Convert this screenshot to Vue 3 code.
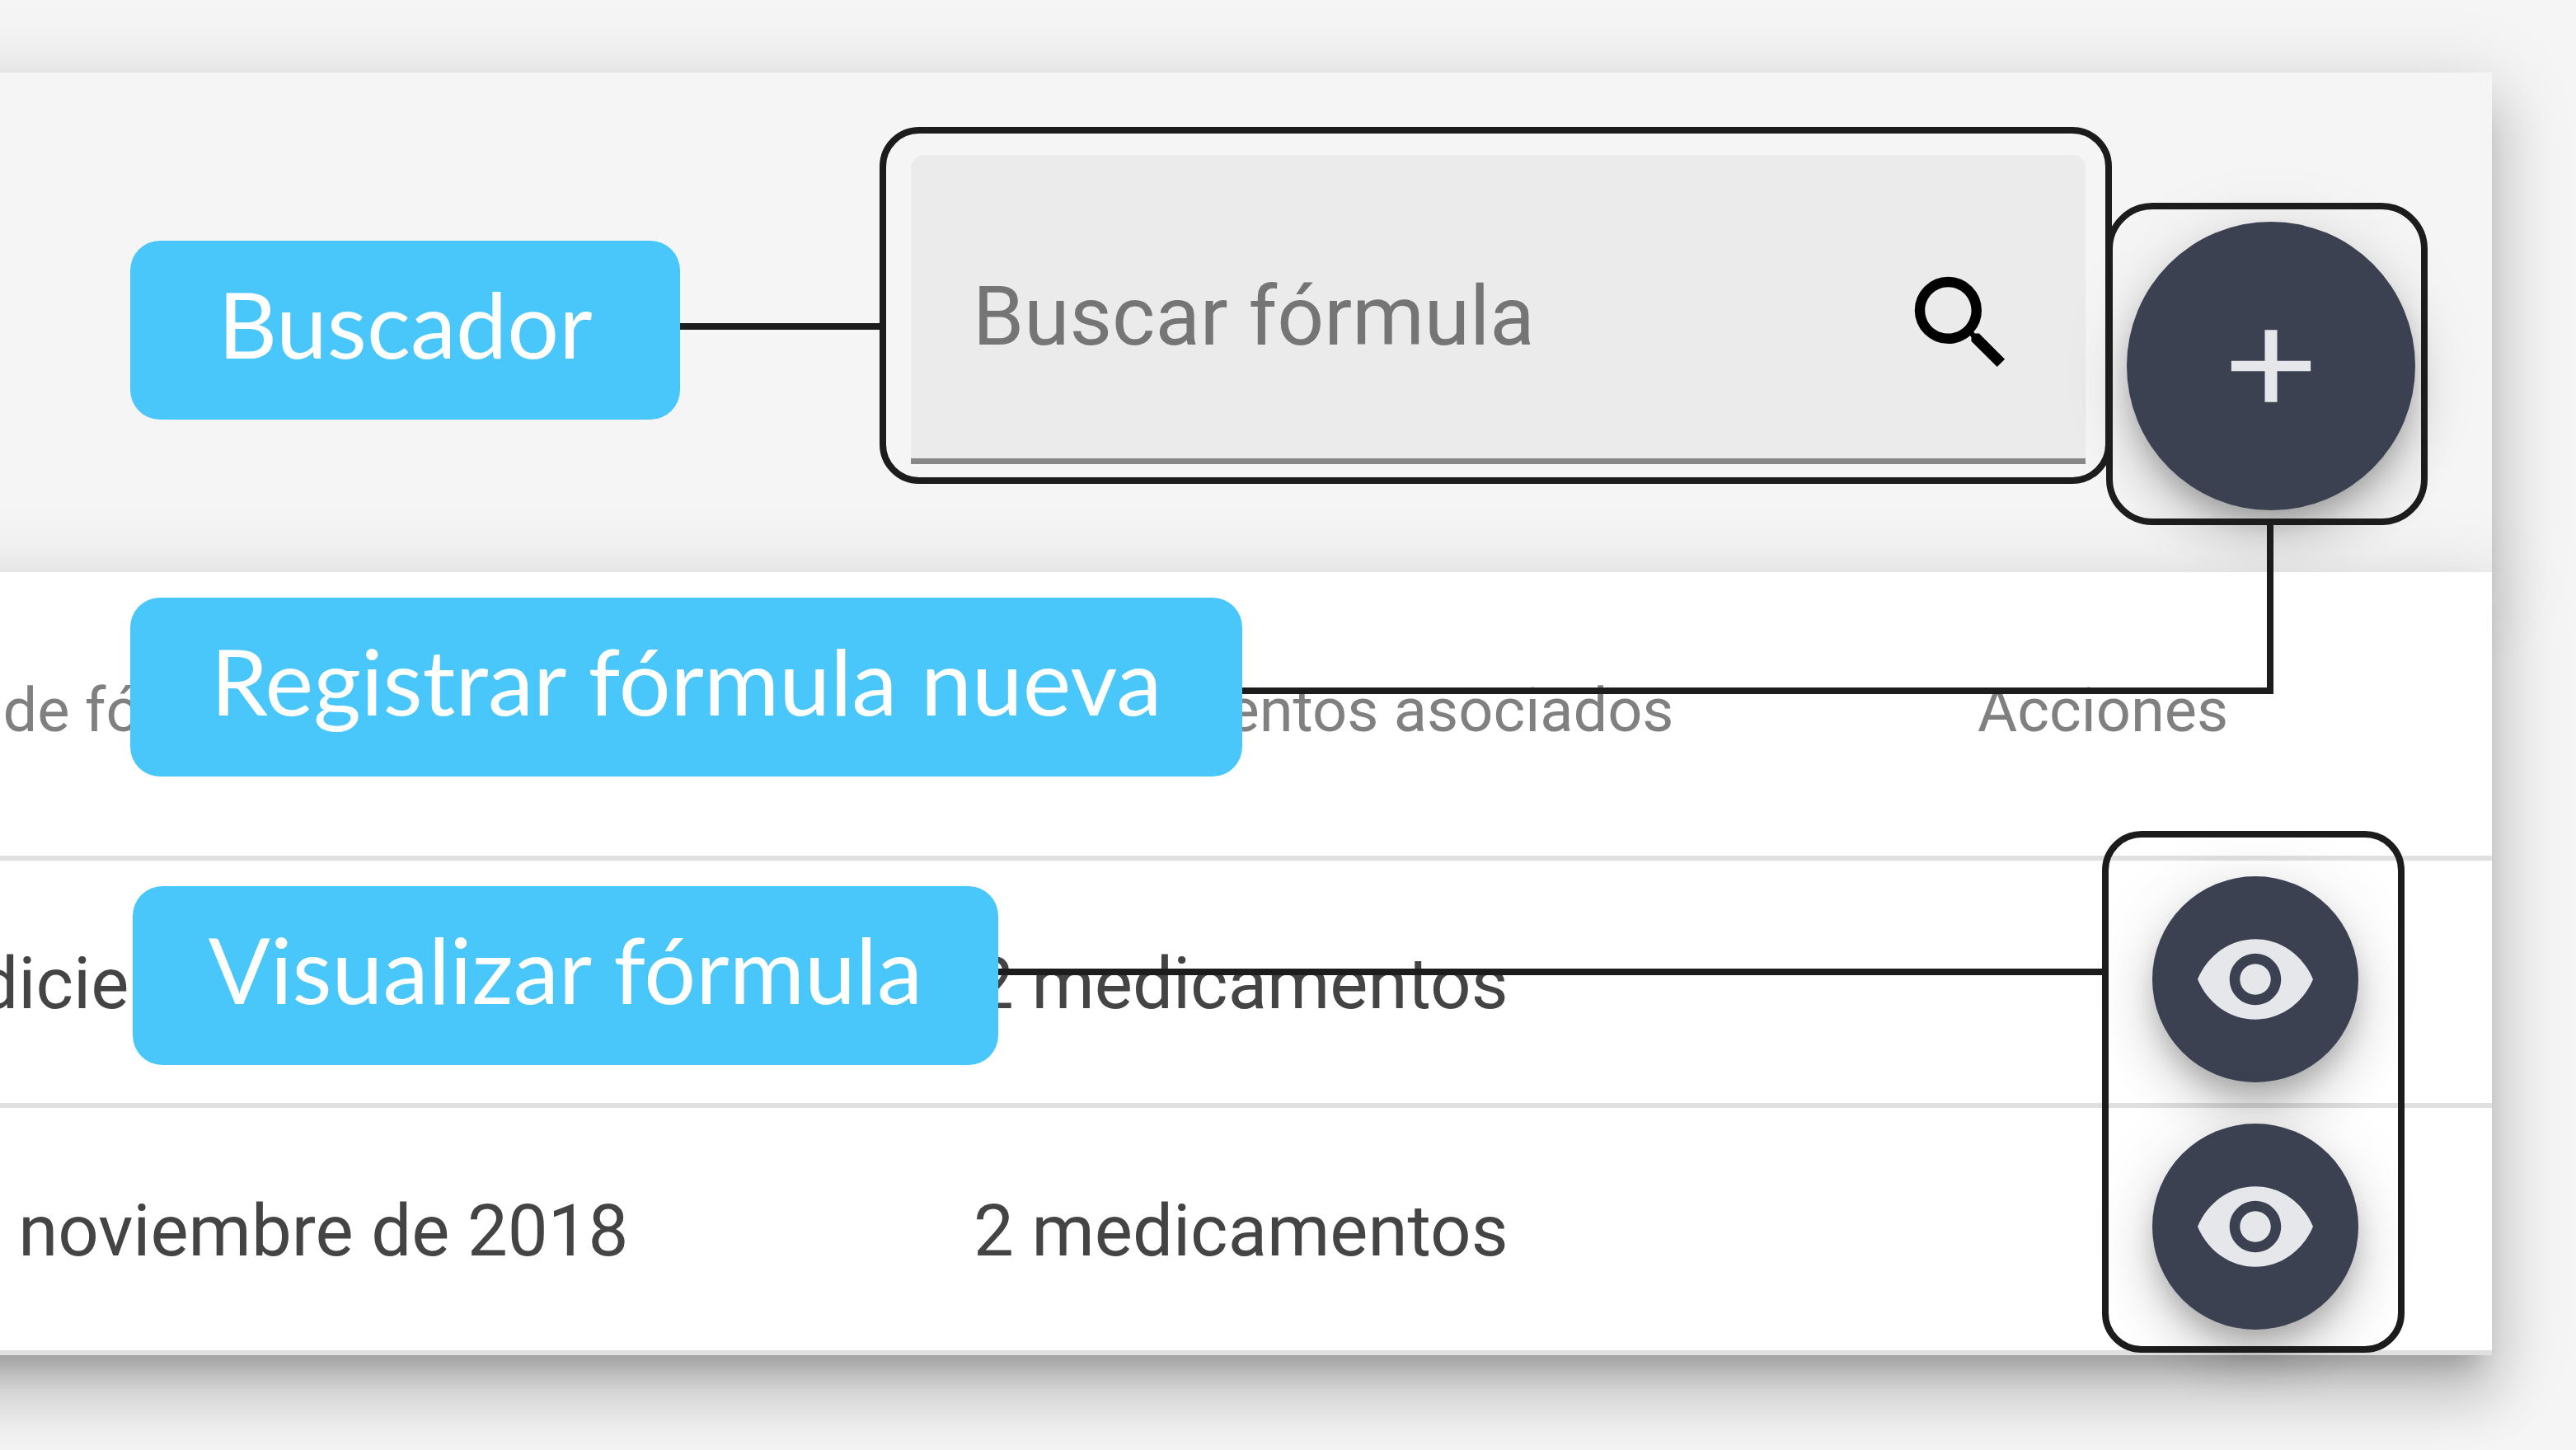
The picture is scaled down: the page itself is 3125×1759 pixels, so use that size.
<script setup>
import { ref } from 'vue'

const query = ref('')

const formulas = [
  { id: 1, date: '5 de diciembre de 2018', medicines: '2 medicamentos' },
  { id: 2, date: '30 de noviembre de 2018', medicines: '2 medicamentos' }
]
</script>

<template>
  <main class="page">
    <section class="card toolbar">
      <div class="search">
        <input v-model="query" class="search-input" type="text" placeholder="Buscar fórmula" aria-label="Buscar fórmula" />
        <svg class="icon" viewBox="0 0 24 24" aria-hidden="true">
          <path d="M15.5 14h-.79l-.28-.27A6.471 6.471 0 0 0 16 9.500 6.500 6.500 0 1 0 9.500 16c1.610 0 3.090-.59 4.230-1.570l.27.28v.79l5 4.990L20.490 19l-4.990-5zm-6 0C7.010 14 5 11.990 5 9.500S7.010 5 9.500 5 14 7.010 14 9.500 11.990 14 9.500 14z" />
        </svg>
      </div>
      <button class="round add" type="button" aria-label="Registrar fórmula nueva">
        <svg class="icon" viewBox="0 0 24 24" aria-hidden="true">
          <path d="M19.700 13h-6.500v6h-2.400v-6H4.300v-2h6.500V5h2.400v6h6.500z" />
        </svg>
      </button>
    </section>

    <section class="card">
      <table class="formulas">
        <thead>
          <tr>
            <th class="date" scope="col">Fecha de fórmula</th>
            <th scope="col">Medicamentos asociados</th>
            <th class="actions" scope="col">Acciones</th>
          </tr>
        </thead>
        <tbody>
          <tr v-for="formula in formulas" :key="formula.id">
            <td>{{ formula.date }}</td>
            <td>{{ formula.medicines }}</td>
            <td class="view-cell">
              <button class="round view" type="button" aria-label="Visualizar fórmula">
                <svg class="icon" viewBox="0 0 24 24" aria-hidden="true">
                  <path d="M12 4.200C7 4.200 2.730 7.400 .8 12c1.930 4.600 6.200 7.800 11.200 7.800s9.270-3.200 11.200-7.800c-1.930-4.600-6.200-7.800-11.200-7.800zM12 17c-2.760 0-5-2.240-5-5s2.240-5 5-5 5 2.240 5 5-2.240 5-5 5zm0-8c-1.660 0-3 1.340-3 3s1.340 3 3 3 3-1.340 3-3-1.340-3-3-3z" />
                </svg>
              </button>
            </td>
          </tr>
        </tbody>
      </table>
    </section>

    <!-- Guide callouts laid over the screen -->
    <div class="guide">
      <div class="frame frame-search"></div>
      <div class="frame frame-add"></div>
      <div class="frame frame-view"></div>
      <div class="line line-search"></div>
      <div class="line line-add"></div>
      <div class="line line-view"></div>
      <div class="label label-search">Buscador</div>
      <div class="label label-add">Registrar fórmula nueva</div>
      <div class="label label-view">Visualizar fórmula</div>
    </div>
  </main>
</template>

<style>
html,
body {
  background: #f5f5f5;
  overflow: hidden;
}
</style>

<style scoped>
.page {
  position: relative;
  box-sizing: border-box;
  min-height: 100vh;
  padding: 88px 102px 0 0;
  font-family: Roboto, "Liberation Sans", sans-serif;
}

/* The cards run on past the left edge of the window */
.card {
  position: relative;
  margin-left: -214px;
  background: #fff;
  box-shadow:
    0 31px 31px -19px rgba(0, 0, 0, 0.2),
    0 50px 62px 6px rgba(0, 0, 0, 0.14),
    0 19px 88px 12px rgba(0, 0, 0, 0.12);
}

.toolbar {
  display: flex;
  justify-content: flex-end;
  align-items: flex-start;
  gap: 50px;
  padding: 100px 93px 75px 0;
  background: #f5f5f5;
}

.search {
  display: flex;
  align-items: center;
  box-sizing: border-box;
  width: 1425px;
  height: 375px;
  padding: 0 76px 0 75px;
  background: #ebebeb;
  border-bottom: 7px solid #888;
  border-radius: 16px 16px 0 0;
}

.search-input {
  flex: 1;
  min-width: 0;
  padding: 24px 0 0;
  border: 0;
  outline: 0;
  background: transparent;
  color: #222;
  font: 100px/120px Roboto, "Liberation Sans", sans-serif;
}

.search-input::placeholder {
  color: #757575;
  opacity: 1;
}

.icon {
  display: block;
  flex: none;
  width: 150px;
  height: 150px;
  fill: currentColor;
}

.search .icon {
  margin-top: 40px;
}

.round {
  display: flex;
  align-items: center;
  justify-content: center;
  flex: none;
  padding: 0;
  border: 0;
  border-radius: 50%;
  background: #3c4151;
  color: #e6e7ea;
  box-shadow:
    0 19px 31px -6px rgba(0, 0, 0, 0.2),
    0 38px 62px 0 rgba(0, 0, 0, 0.14),
    0 6px 88px 0 rgba(0, 0, 0, 0.1);
}

.add {
  width: 350px;
  height: 350px;
  margin-top: 81px;
}

.view {
  width: 250px;
  height: 250px;
}

.formulas {
  width: 100%;
  table-layout: fixed;
  border-collapse: separate;
  border-spacing: 0;
  text-align: left;
}

th,
td {
  box-sizing: border-box;
  padding: 0;
  border-bottom: 6px solid #e0e0e0;
  vertical-align: middle;
}

th {
  height: 350px;
  padding-bottom: 10px;
  color: #808080;
  font-size: 74px;
  font-weight: 400;
}

td {
  height: 300px;
  padding-top: 4px;
  color: #444;
  font-size: 87px;
}

.date {
  width: 1395px;
}

.actions {
  width: 624px;
}

.view-cell {
  padding: 0 0 6px 212px;
}

.guide {
  position: absolute;
  inset: 0;
  pointer-events: none;
}

.frame,
.line,
.label {
  position: absolute;
  box-sizing: border-box;
}

.frame {
  border: 8px solid #1c1c1c;
  border-radius: 48px;
}

.frame-search {
  top: 154px;
  right: 563px;
  width: 1495px;
  height: 433px;
}

.frame-add {
  top: 246px;
  right: 180px;
  width: 390px;
  height: 391px;
  border-radius: 56px;
}

.frame-view {
  top: 1008px;
  right: 208px;
  width: 367px;
  height: 633px;
}

.line {
  border: 0 solid #1c1c1c;
  border-bottom-width: 8px;
}

.line-search {
  top: 392px;
  left: 824px;
  right: 2058px;
  height: 8px;
}

.line-add {
  top: 636px;
  left: 1506px;
  right: 367px;
  height: 206px;
  border-right-width: 8px;
}

.line-view {
  top: 1175px;
  left: 1210px;
  right: 574px;
  height: 8px;
}

.label {
  display: flex;
  align-items: center;
  justify-content: center;
  height: 217px;
  padding-bottom: 18px;
  border-radius: 36px;
  background: #4ac7fa;
  color: #fff;
  font: 111px/130px Lato, "Open Sans", sans-serif;
  white-space: nowrap;
}

.label-search {
  top: 292px;
  left: 158px;
  width: 667px;
}

.label-add {
  top: 725px;
  left: 158px;
  width: 1349px;
}

.label-view {
  top: 1075px;
  left: 161px;
  width: 1050px;
}
</style>
